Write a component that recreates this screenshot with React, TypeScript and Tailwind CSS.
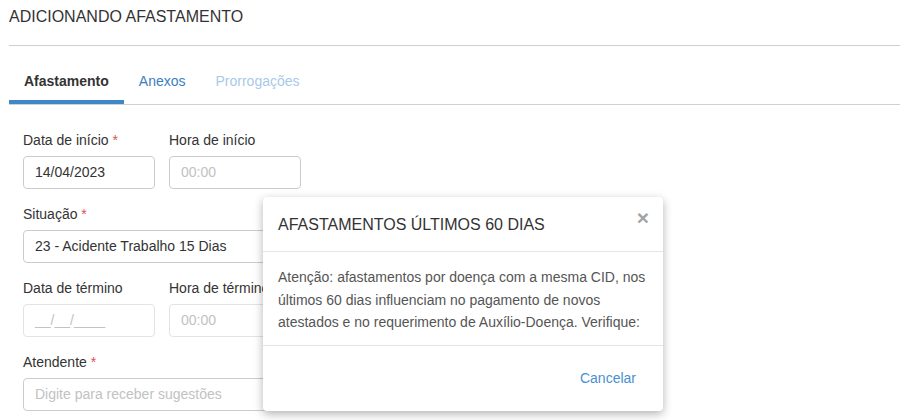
import React from "react";

const font = { fontFamily: '"Liberation Sans", Arial, sans-serif' };

function Label({ text, required }: { text: string; required?: boolean }) {
  return (
    <div className="h-[20px] text-[14px] leading-[20px] text-[#333] whitespace-nowrap">
      {text}
      {required && <span className="text-[#d9534f]"> *</span>}
    </div>
  );
}

function Input({
  value,
  placeholder,
  disabled,
  className,
}: {
  value?: string;
  placeholder?: string;
  disabled?: boolean;
  className: string;
}) {
  return (
    <div
      className={
        "mt-[6px] h-[33px] rounded-[4px] border bg-white px-[11px] flex items-center text-[14px] whitespace-nowrap overflow-hidden " +
        (disabled ? "border-[#e3e3e3] " : "border-[#cccccc] ") +
        className
      }
    >
      {value ? (
        <span className="text-[#333]">{value}</span>
      ) : (
        <span className="text-[#c2c2c2]">{placeholder}</span>
      )}
    </div>
  );
}

export default function App() {
  return (
    <div className="relative w-[908px] h-[420px] bg-white overflow-hidden" style={font}>
      <div className="pl-[9px] pr-[8px]">
        <div className="pt-[7px] h-[27px] text-[16px] leading-[20px] text-[#333]">
          ADICIONANDO AFASTAMENTO
        </div>
        <div className="mt-[18px] h-px bg-[#cfcfcf]" />
        <div className="mt-[15px] flex border-b border-[#d0d0d0] text-[14px] leading-[20px]">
          <div className="px-[15px] pt-[10px] pb-[9px] border-b-4 border-[#3f88c8] font-bold text-[#333]">
            Afastamento
          </div>
          <div className="px-[15px] pt-[10px] pb-[13px] text-[#3a7fc1]">Anexos</div>
          <div className="px-[15px] pt-[10px] pb-[13px] text-[#a9c9e8]">Prorrogações</div>
        </div>
        <div className="pl-[14px] pt-[25px] flex flex-col gap-[15px]">
          <div className="flex gap-[14px]">
            <div>
              <Label text="Data de início" required />
              <Input value="14/04/2023" className="w-[132px]" />
            </div>
            <div>
              <Label text="Hora de início" />
              <Input placeholder="00:00" className="w-[132px]" />
            </div>
          </div>
          <div>
            <Label text="Situação" required />
            <Input value="23 - Acidente Trabalho 15 Dias" className="w-[569px]" />
          </div>
          <div className="flex gap-[14px]">
            <div>
              <Label text="Data de término" />
              <Input placeholder="__/__/____" disabled className="w-[132px]" />
            </div>
            <div>
              <Label text="Hora de término" />
              <Input placeholder="00:00" disabled className="w-[132px]" />
            </div>
          </div>
          <div className="flex gap-[18px]">
            <div>
              <Label text="Atendente" required />
              <Input placeholder="Digite para receber sugestões" className="w-[277px]" />
            </div>
            <div>
              <Label text="" />
              <Input placeholder="" className="w-[274px]" />
            </div>
          </div>
        </div>
      </div>

      <div className="absolute left-[263px] top-[197px] w-[400px] h-[214px] bg-white rounded-[4px] shadow-[0_3px_10px_rgba(0,0,0,0.3)] flex flex-col">
        <div className="h-[55px] border-b border-[#e5e5e5] pl-[15px] pr-[14px] flex items-start justify-between">
          <div className="mt-[15px] text-[16px] leading-[25px] text-[#333]">
            AFASTAMENTOS ÚLTIMOS 60 DIAS
          </div>
          <div className="mt-[10px] text-[21px] leading-[21px] font-bold text-[#a3a3a3]">×</div>
        </div>
        <div className="h-[94px] border-b border-[#e5e5e5] px-[15px] pt-[14px] text-[14px] leading-[22.5px] text-[#555]">
          Atenção: afastamentos por doença com a mesma CID, nos últimos 60 dias influenciam no pagamento de novos atestados e no requerimento de Auxílio-Doença. Verifique:
        </div>
        <div className="flex-1 flex items-center justify-end pr-[15px]">
          <div className="px-[12px] h-[34px] flex items-center text-[14px] text-[#4a90d0]">Cancelar</div>
        </div>
      </div>
    </div>
  );
}
